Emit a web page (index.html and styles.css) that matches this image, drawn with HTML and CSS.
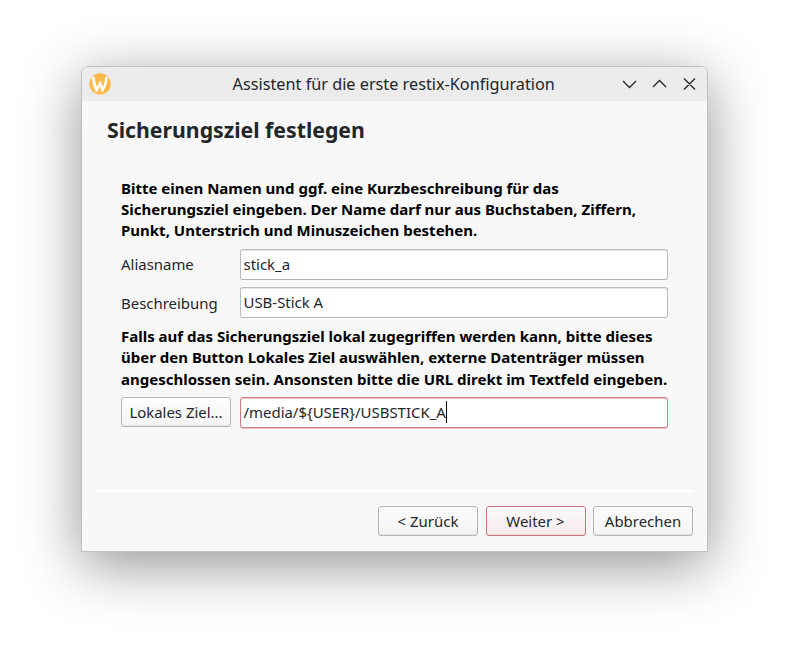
FILE: index.html
```html
<!DOCTYPE html>
<html lang="de">
<head>
<meta charset="utf-8">
<title>Assistent für die erste restix-Konfiguration</title>
<link rel="stylesheet" href="styles.css">
</head>
<body>
<main class="window">
  <header class="titlebar">
    <svg class="logo" viewBox="0 0 22 22">
      <defs><linearGradient id="g" x1="0" y1="1" x2="1" y2="0"><stop offset="0" stop-color="#ffc35e"/><stop offset=".5" stop-color="#fdb94a"/><stop offset="1" stop-color="#f3b545"/></linearGradient></defs>
      <circle cx="11" cy="11" r="10.7" fill="url(#g)"/>
      <path d="M2.800 4.300 5.500 3.600Q6.100 9.500 8 14.200L10.700 8.300 12 8.200 14 14.200Q16.200 9.300 16.200 3.500L18.800 4.200Q18.300 12 14 18.700H12.600L10.900 13 8.200 18.700H6.700Q3.400 12.500 2.800 4.300Z" fill="#fff"/>
    </svg>
    <h1 class="caption">Assistent für die erste restix-Konfiguration</h1>
    <svg class="controls" viewBox="0 0 78 16">
      <path d="M3 5 9.500 11.500 16 5M33 11 39.500 4.500 46 11M64 2.500 75 13.500M75 2.500 64 13.500"/>
    </svg>
  </header>
  <h2 class="heading">Sicherungsziel festlegen</h2>
  <section class="form">
    <p class="hint">Bitte einen Namen und ggf. eine Kurzbeschreibung für das<br>Sicherungsziel eingeben. Der Name darf nur aus Buchstaben, Ziffern,<br>Punkt, Unterstrich und Minuszeichen bestehen.</p>
    <div class="row alias"><span class="label">Aliasname</span><div class="field">stick_a</div></div>
    <div class="row description"><span class="label">Beschreibung</span><div class="field">USB-Stick A</div></div>
    <p class="hint second">Falls auf das Sicherungsziel lokal zugegriffen werden kann, bitte dieses<br>über den Button Lokales Ziel auswählen, externe Datenträger müssen<br>angeschlossen sein. Ansonsten bitte die URL direkt im Textfeld eingeben.</p>
    <div class="row target"><button class="button local">Lokales Ziel...</button><div class="field focused">/media/${USER}/USBSTICK_A<i class="caret"></i></div></div>
  </section>
  <footer class="footer">
    <button class="button">&lt; Zurück</button>
    <button class="button primary">Weiter &gt;</button>
    <button class="button">Abbrechen</button>
  </footer>
</main>
</body>
</html>
```
FILE: styles.css
```css
* { box-sizing: border-box; }
body {
  margin: 0;
  height: 648px;
  padding: 66px 0 0 81px;
  overflow: hidden;
  background: #fff;
  color: #232629;
  font: 14.95px/20px "Noto Sans", sans-serif;
}
h1, h2, p { margin: 0; }
.window {
  width: 627px;
  height: 486px;
  display: flex;
  flex-direction: column;
  border: 1px solid #bfc0c0;
  border-radius: 7px 7px 0 0;
  background: #f8f8f8;
  box-shadow: 0 13px 58px rgba(0,0,0,.43);
}
.titlebar {
  height: 34px;
  flex: none;
  display: flex;
  align-items: center;
  padding: 0 9px 0 6.500px;
  border-radius: 6px 6px 0 0;
  background: #ececec;
}
.logo { width: 22px; height: 22px; margin-top: -1px; }
.caption {
  flex: 1;
  padding-left: 57px;
  text-align: center;
  white-space: nowrap;
  font-size: 16.24px;
  font-weight: 400;
}
.controls {
  width: 78px;
  height: 16px;
  margin-top: -1px;
  fill: none;
  stroke: #232629;
  stroke-width: 1.3;
}
.heading {
  margin: 14px 0 0 25px;
  font-size: 21.25px;
  line-height: 30px;
}
.form { margin: 33px 39px 0; }
.hint {
  color: #000;
  font-size: 15.01px;
  font-weight: 700;
  line-height: 21px;
  white-space: nowrap;
}
.row { display: flex; }
.label { width: 119px; line-height: 30px; }
.field {
  width: 428px;
  height: 31px;
  padding: 0 2.500px 1px;
  display: flex;
  align-items: center;
  border: 1px solid #bbb;
  border-bottom-color: #b4b4b4;
  border-radius: 3px;
  background: #fff;
  box-shadow: inset 0 1px #e6e6e6;
}
.alias { margin-top: 8px; }
.description { margin-top: 7px; }
.description .label { line-height: 32px; }
.second { margin-top: 7px; line-height: 21.33px; }
.target { margin-top: 7px; gap: 9px; }
.focused { border-color: #ce7b85; box-shadow: inset 0 1px #e6c6ca, 0 1px #e6c6ca; }
.caret { width: 1px; height: 22px; margin-top: 1px; background: #000; }
.button {
  width: 100px;
  height: 30px;
  padding: 0;
  border: 1px solid #b5b5b5;
  border-radius: 3px;
  background: linear-gradient(#fdfdfd, #f4f4f4);
  color: inherit;
  font: inherit;
  box-shadow: inset 0 -1px #e4e4e4;
}
.local { width: 110px; padding-top: 1px; }
.primary { border-color: #cb7480; background: linear-gradient(#fcfafa, #f6ebec); }
.footer {
  display: flex;
  justify-content: flex-end;
  gap: 7.500px;
  margin: auto 14px 15px;
  padding-top: 14px;
  border-top: 2px solid #fff;
}
.footer .button { flex: none; }
```
